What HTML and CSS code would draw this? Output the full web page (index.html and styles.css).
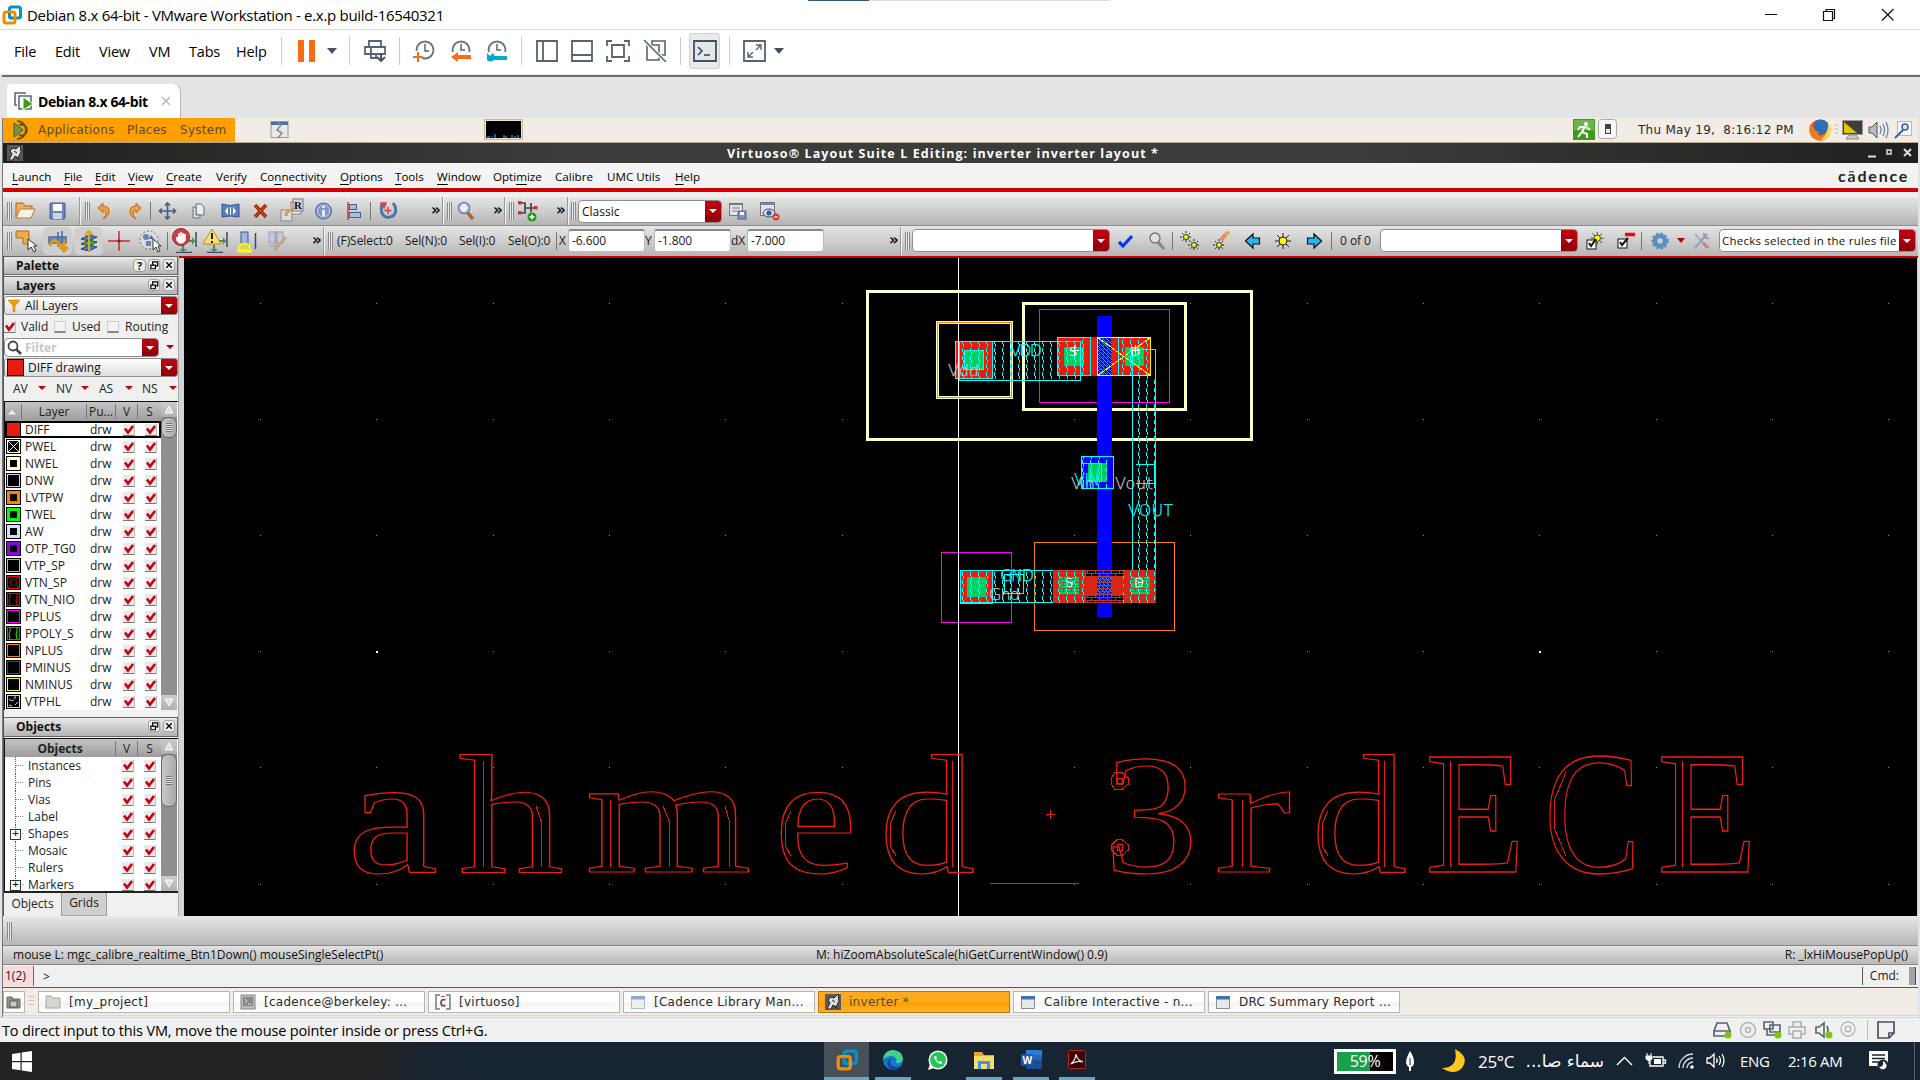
FILE: index.html
```html
<!DOCTYPE html>
<html lang="en">
<head>
<meta charset="utf-8">
<title>Debian 8.x 64-bit - VMware Workstation</title>
<link rel="stylesheet" href="styles.css">
</head>
<body>
<svg class="defs" width="0" height="0">
  <symbol id="ck" viewBox="0 0 12 12"><rect width="12" height="12" fill="#e9e9e9"/><path d="M0 11.5H12" stroke="#777"/><path d="M11.5 0V12" stroke="#bbb"/><path d="M2 4.5L5 8.5L10 2" fill="none" stroke="#c80010" stroke-width="2.6"/></symbol>
  <symbol id="float" viewBox="0 0 14 14"><rect x=".5" y=".5" width="12" height="12" rx="3" fill="#eee" stroke="#999"/><path d="M5 6V3H10.500V7.500H8.500M3 6.500H8V10.500H3Z" fill="none" stroke="#000" stroke-width="1.300"/></symbol>
  <symbol id="close" viewBox="0 0 14 14"><rect x=".5" y=".5" width="12" height="12" rx="3" fill="#eee" stroke="#999"/><path d="M3.500 3.500L9.500 9.500M9.500 3.500L3.500 9.500" stroke="#000" stroke-width="1.400"/></symbol>
  <symbol id="win" viewBox="0 0 16 16"><rect x="1.500" y="2.500" width="13" height="12" fill="#e8e8e4" stroke="#8a8f98"/><rect x="1" y="2" width="14" height="3.500" fill="#3f73b9"/></symbol>
  <symbol id="vmw" viewBox="0 0 20 20"><rect x="7.500" y="2" width="11" height="11" rx="2" fill="none" stroke="#0091cf" stroke-width="3"/><rect x="2" y="7" width="11" height="11" rx="2" fill="none" stroke="#f38b00" stroke-width="3"/><path d="M7.500 8V11.500Q7.500 13 9 13H10" fill="none" stroke="#0091cf" stroke-width="3"/></symbol>
  <symbol id="bird" viewBox="0 0 16 16"><rect width="16" height="16" fill="#5a5a5a"/><path d="M2 15L5 9L3 6L6 3L9 4L13 0L14 7L11 13L8 11L6 15ZM9 12L13 15M7 6L10 8" fill="#ddd" stroke="#222"/></symbol>
  <symbol id="sun" viewBox="0 0 18 18"><path d="M9 1V17M1 9H17M3 3L15 15M15 3L3 15" stroke="#222" stroke-width="1"/><circle cx="9" cy="9" r="4" fill="#ff0" stroke="#222"/></symbol>
</svg>

<header class="titlebar">
  <svg class="logo" width="20" height="20"><use href="#vmw"/></svg>
  <span class="title">Debian 8.x 64-bit - VMware Workstation - e.x.p build-16540321</span>
  <i class="topedge"></i>
  <svg class="winbtns" width="170" height="28"><path d="M21 13.500H33" stroke="#111"/><path d="M79.500 19.500V10.500H88.500V19.500ZM82 10V8.500H90.500V17.500H89" fill="none" stroke="#111" stroke-width="1.200"/><path d="M138 8L149.500 19.500M149.500 8L138 19.500" stroke="#111" stroke-width="1.200"/></svg>
</header>

<nav class="vmbar">
  <span>File</span><span>Edit</span><span>View</span><span>VM</span><span>Tabs</span><span>Help</span>
  <i class="vsep"></i>
  <svg width="18" height="22"><path d="M0 0H6V22H0ZM11 0H17V22H11Z" fill="#ff6a13"/></svg>
  <svg width="10" height="6"><path d="M0 0H10L5 6Z" fill="#44525f"/></svg>
  <i class="vsep"></i>
  <svg width="23" height="22"><path d="M5 7V1H17V7M1 7H21V14H1ZM7 7V14M12 14V18H7V14" fill="none" stroke="#55646f" stroke-width="1.800"/><path d="M17 13V20M13 17L17 21L21 17" fill="none" stroke="#44525f" stroke-width="2"/></svg>
  <i class="vsep"></i>
  <svg width="23" height="22"><circle cx="12" cy="10" r="8.500" fill="none" stroke="#66737d" stroke-width="1.800"/><path d="M12 4V11H16" fill="none" stroke="#55646f" stroke-width="1.500"/><path d="M0 11H9V22H0Z" fill="#fff"/><path d="M5 12V22M0 17H10" stroke="#f56b20" stroke-width="2"/></svg>
  <svg width="24" height="22"><circle cx="12" cy="10" r="8.500" fill="none" stroke="#66737d" stroke-width="1.800"/><path d="M12 4V10H16" fill="none" stroke="#55646f" stroke-width="1.500"/><path d="M0 12H24V22H0Z" fill="#fff"/><path d="M2 17L9 12V15H22V19H9V22Z" fill="#ff6a13"/></svg>
  <svg width="24" height="22"><circle cx="12" cy="10" r="8.500" fill="none" stroke="#66737d" stroke-width="1.800"/><path d="M12 4V10H16" fill="none" stroke="#55646f" stroke-width="1.500"/><path d="M0 12H24V22H0Z" fill="#fff"/><path d="M2 13L5 16L8 13Q10 15 9 16H22V20H9Q5 23 2 20Z" fill="#00a8d6"/></svg>
  <i class="vsep"></i>
  <svg width="23" height="22"><path d="M1 1H21V21H1ZM7 1V21" fill="none" stroke="#55646f" stroke-width="1.800"/></svg>
  <svg width="23" height="22"><path d="M1 1H21V21H1ZM1 15H21" fill="none" stroke="#55646f" stroke-width="1.800"/></svg>
  <svg width="24" height="22"><path d="M1 6V1H6M18 1H23V6M23 16V21H18M6 21H1V16M6 5H18V17H6Z" fill="none" stroke="#55646f" stroke-width="1.800"/></svg>
  <svg width="24" height="22"><path d="M4 5H16V20H4ZM9 5V1H22V15H16" fill="none" stroke="#55646f" stroke-width="1.600"/><path d="M1 0L23 22" stroke="#fff" stroke-width="4"/><path d="M1 0L23 22" stroke="#55646f" stroke-width="1.600"/></svg>
  <i class="vsep"></i>
  <b class="console"><svg width="24" height="22"><path d="M1 1H23V21H1Z" fill="#e3e6e9" stroke="#44525f" stroke-width="1.800"/><path d="M5 7L9 11L5 15M11 15H17" fill="none" stroke="#33414d" stroke-width="1.500"/></svg></b>
  <i class="vsep"></i>
  <svg width="23" height="22"><path d="M1 1H22V21H1Z" fill="none" stroke="#55646f" stroke-width="1.800"/><path d="M5 12V17H10M5 17L10 12M13 10L18 5M13 5H18V10" fill="none" stroke="#55646f" stroke-width="1.400"/></svg>
  <svg width="10" height="6"><path d="M0 0H10L5 6Z" fill="#44525f"/></svg>
</nav>

<div class="tabstrip">
  <div class="tab"><svg width="20" height="18"><path d="M11 2V1H1V13H3M5 17V4H17V17Z" fill="none" stroke="#55646f" stroke-width="1.500"/><path d="M9 5L19 12L9 18Z" fill="#3d9b12" stroke="#fff"/></svg><b>Debian 8.x 64-bit</b><svg class="tx" width="10" height="10"><path d="M1 1L9 9M9 1L1 9" stroke="#b5b5b5" stroke-width="1.300"/></svg></div>
</div>

<main class="guest">
  <div class="panel">
    <div class="places"><svg width="22" height="22"><path d="M3 4L12 11L3 18Z" fill="#6d9a42" stroke="#3c5a2b"/><path d="M6 2A9 9 0 1 1 6 20M8 6A5.500 5.500 0 1 1 8 16" fill="none" stroke="#5c5626" stroke-width="2"/></svg><span>Applications</span><span>Places</span><span>System</span></div>
    <svg width="20" height="18"><rect x="1" y=".5" width="17" height="16" fill="#e9eae8" stroke="#999"/><path d="M1 1H18V4H1Z" fill="#4871a9"/><path d="M8 1L11 4L7 9L12 12L8 17" fill="none" stroke="#888" stroke-width="1.500"/></svg>
    <svg width="40" height="22"><rect x=".5" y=".5" width="38" height="20" fill="#efe0cf" stroke="#c8b59c"/><rect x="2" y="2" width="35" height="17" fill="#000"/><path d="M3 18H6M8 18V17M11 19V15M20 19V16M22 19V17M28 19V16M31 19V17M34 19V16" stroke="#2a7fc0" stroke-width="1.500"/></svg>
    <svg width="22" height="22"><rect width="22" height="21" fill="#3f9b1f"/><rect x="1" y="1" width="20" height="10" fill="#66b84a"/><circle cx="13" cy="5" r="2" fill="#fff"/><path d="M12 7L9 13L14 15V19M9 13L5 18M12 8L7 8L5 11M13 8L17 11" fill="none" stroke="#fff" stroke-width="2"/></svg>
    <svg width="20" height="22"><rect x=".5" y=".5" width="18" height="19" rx="3" fill="#f8f8f6" stroke="#aaa"/><rect x="7" y="5" width="6" height="10" fill="#444"/><rect x="8" y="10" width="4" height="4" fill="#eee"/></svg>
    <span class="clock">Thu May 19, &nbsp;8:16:12 PM</span>
    <svg width="24" height="24"><circle cx="12" cy="12" r="10.500" fill="#e05a10"/><circle cx="13" cy="9" r="7.500" fill="#2a6fb8"/><path d="M2 6L5 8Q6 13 11 14Q8 17 13 18Q19 16 20 9L22 12Q23 19 16 22Q8 24 3 18Q0 13 2 6Z" fill="#ee7a1c"/><path d="M20 5Q24 10 22 16Q19 22 13 22Q21 15 20 5" fill="#ffd94a"/></svg>
    <svg width="6" height="12"><path d="M1 1H4M1 5H4M1 9H4" stroke="#c5b59d"/></svg>
    <svg width="22" height="22"><rect x=".5" y="1.500" width="20" height="14" fill="#3c3f3c" stroke="#999"/><path d="M2 3L15 14H2Z" fill="#e8c300"/><path d="M7 16H14L17 20H4Z" fill="#ccc" stroke="#888"/></svg>
    <svg width="22" height="20"><path d="M1 7H4L9 2V18L4 13H1Z" fill="#bbb" stroke="#555"/><path d="M12 6Q14 10 12 14M15 4Q18 10 15 16M18 2Q22 10 18 18" fill="none" stroke="#6685a6" stroke-width="1.300"/></svg>
    <svg width="19" height="18"><rect x="3.500" y=".5" width="14" height="14" fill="#f5f6f8" stroke="#b5b9c0"/><circle cx="11" cy="6" r="3" fill="#d7e6f5" stroke="#3465a4" stroke-width="1.500"/><path d="M9 9L1 17" stroke="#3465a4" stroke-width="2"/></svg>
  </div>
  <div class="wtitle"><svg width="16" height="16"><use href="#bird"/></svg><b>Virtuoso® Layout Suite L Editing: inverter inverter layout *</b><svg width="48" height="12"><path d="M1 9.500H9" stroke="#ddd" stroke-width="2"/><rect x="20" y="3" width="4" height="4" fill="none" stroke="#ddd" stroke-width="1.500"/><path d="M37 2L44 9M44 2L37 9" stroke="#ddd" stroke-width="2"/></svg></div>
  <div class="cmenu">
    <span><u>L</u>aunch</span><span><u>F</u>ile</span><span><u>E</u>dit</span><span><u>V</u>iew</span><span><u>C</u>reate</span><span>Ver<u>i</u>fy</span><span>Co<u>n</u>nectivity</span><span><u>O</u>ptions</span><span><u>T</u>ools</span><span><u>W</u>indow</span><span>Opti<u>m</u>ize</span><span>Calibre</span><span>UMC Utils</span><span><u>H</u>elp</span><b class="brand">c<span class="abar">ā</span>dence</b>
  </div>

  <div class="bar bar1">
    <i class="grip"></i>
    <svg width="21" height="20"><path d="M1 17V2H8L10 5H17V8" fill="#f0b060" stroke="#a9651c"/><path d="M1 17L5 8H20L16 17Z" fill="#f7f1e6" stroke="#c07a28"/></svg>
    <svg width="18" height="20"><rect x="1" y="2" width="15" height="16" rx="1" fill="#6d86b5" stroke="#44598a"/><rect x="4" y="3" width="9" height="7" fill="#fff"/><rect x="4" y="12" width="9" height="6" fill="#c9d3e6"/></svg>
    <i class="edge"></i><i class="grip"></i>
    <svg width="18" height="20"><path d="M3 7L8 2V5Q15 5 14 12Q13 16 8 18Q12 14 11 11Q10 9 8 9V12Z" fill="#eda04b" stroke="#c06b18"/></svg>
    <svg width="18" height="20"><path d="M15 7L10 2V5Q3 5 4 12Q5 16 10 18Q6 14 7 11Q8 9 10 9V12Z" fill="#eda04b" stroke="#c06b18"/></svg>
    <i class="bsep"></i>
    <svg width="20" height="20"><path d="M9.500 2V18M1.500 10H17.500M7 4.500L9.500 2L12 4.500M7 15.500L9.500 18L12 15.500M4 7.500L1.500 10L4 12.500M15 7.500L17.500 10L15 12.500" fill="none" stroke="#466089" stroke-width="1.700"/></svg>
    <svg width="18" height="20"><path d="M6 3H11L14 6V14H6Z" fill="#e8edf2" stroke="#66717d"/><path d="M3 6H6V14H10V17H3Z" fill="#d5dce4" stroke="#66717d"/></svg>
    <svg width="20" height="20"><path d="M1 3Q9 6 18 3V16Q9 14 1 16Z" fill="#5c7fb8" stroke="#33548c"/><path d="M4 10L7 6V14ZM15 10L12 6V14Z" fill="#fff"/><path d="M9.500 6V14" stroke="#fff"/></svg>
    <svg width="18" height="20"><path d="M3 4L14 16M14 4L3 16" stroke="#9c2a04" stroke-width="3.600"/><path d="M3 4L14 16M14 4L3 16" stroke="#d95c1b" stroke-width="1"/></svg>
    <svg width="26" height="26"><rect x="11" y="4" width="10" height="12" fill="#eee" stroke="#888"/><rect x="1" y="12" width="11" height="11" fill="#ddd" stroke="#888"/><path d="M6 18Q6 12 13 12" fill="none" stroke="#e59b42" stroke-width="3"/><rect x="13" y="1" width="10" height="12" fill="#d5d5d5" stroke="#777"/><text x="14" y="11" class="ricon">R</text></svg>
    <svg width="18" height="20"><circle cx="8.500" cy="10" r="8" fill="#7f95cc" stroke="#5168a4"/><circle cx="8.500" cy="10" r="6" fill="none" stroke="#c9d4ef"/><path d="M8.500 9V15M8.500 5V7" stroke="#fff" stroke-width="2.500"/></svg>
    <svg width="18" height="20"><path d="M2 1V19" stroke="#c33" stroke-width="1.500"/><rect x="3.500" y="3.500" width="7" height="5" fill="#a8bcdf" stroke="#466089"/><rect x="3.500" y="11.500" width="11" height="5" fill="#a8bcdf" stroke="#466089"/></svg>
    <i class="bsep"></i>
    <svg width="20" height="20"><path d="M3 3Q1 10 4 14Q9 19 15 14Q19 8 14 2" fill="none" stroke="#4e73ae" stroke-width="3"/><path d="M7 2L2 2L5 7ZM9 6V13M5.500 9.500H12.500" fill="#4e73ae" stroke="#e04040" stroke-width="1.500"/></svg>
    <span class="more">»</span><i class="edge"></i><i class="grip"></i>
    <svg width="20" height="20"><path d="M10 11L16 18" stroke="#b06a2a" stroke-width="3.500"/><circle cx="7" cy="7" r="5.500" fill="#cfe0f5" stroke="#6a83a8" stroke-width="1.600"/><path d="M7 4V10M4 7H10" stroke="#fff" stroke-width="2"/></svg>
    <span class="more">»</span><i class="edge"></i><i class="grip"></i>
    <svg width="22" height="22"><path d="M3 3H8V13H3M8 8H18M14 3V12" fill="none" stroke="#444" stroke-width="1.700"/><rect x="1" y="1" width="3.500" height="3.500" fill="#c33"/><rect x="1" y="11" width="3.500" height="3.500" fill="#c33"/><rect x="17" y="6" width="3.500" height="3.500" fill="#c33"/><circle cx="15" cy="17" r="4.500" fill="#1a9a1a"/><path d="M15 14.500V19.500M12.500 17H17.500" stroke="#fff" stroke-width="1.500"/></svg>
    <span class="more">»</span><i class="edge"></i><i class="grip"></i>
    <div class="combo c1"><span>Classic</span><i></i></div>
    <svg width="20" height="20"><rect x="1.500" y="2.500" width="13" height="12" fill="#e4e4e4" stroke="#777"/><path d="M2 3.500H14M4 7H12M4 10H9" stroke="#778"/><rect x="10" y="10" width="8" height="8" fill="#7d93c4" stroke="#51648f"/><rect x="12" y="11" width="4" height="3" fill="#fff"/></svg>
    <svg width="22" height="20"><rect x="1.500" y="1.500" width="14" height="13" fill="#e4e4e4" stroke="#777"/><path d="M2 3H15" stroke="#6a88b8" stroke-width="2"/><ellipse cx="10" cy="12" rx="6" ry="4" fill="#cdd9ee" stroke="#446"/><circle cx="10" cy="12" r="2.500" fill="#345a96"/><circle cx="17" cy="16" r="3.500" fill="#cf3b34"/><path d="M15 16H19" stroke="#fff"/></svg>
  </div>

  <div class="bar bar2">
    <i class="grip"></i>
    <svg width="23" height="24"><path d="M1 2H14V15H8V9H1Z" fill="#efaa4e" stroke="#ad6a1c"/><path d="M13 10V21L16 18L19 23L21 22L18.500 17H22Z" fill="#fff" stroke="#333"/></svg>
    <b class="press"><svg width="24" height="24"><path d="M3 8H20V14H3ZM12 3V18M16 2V17" fill="#6f8dc0" stroke="#4a699e" stroke-width="1.500"/><path d="M4 17Q5 12 9 12Q12 12 13 16Q16 17 18 14V21M14 18L18 22L22 18" fill="none" stroke="#d99a1e" stroke-width="3"/></svg></b>
    <b class="press"><svg width="24" height="24"><path d="M4 10L12 6L20 8L12 12Z" fill="#4f78b8" stroke="#24457d"/><path d="M4 15L12 11L20 13L12 17Z" fill="#55a344" stroke="#245a1d"/><path d="M4 20L12 16L20 18L12 22Z" fill="#4f78b8" stroke="#24457d"/><path d="M12 22V4M8 6L12 2L16 6" stroke="#dca818" stroke-width="2" fill="none"/></svg></b>
    <svg width="23" height="24"><path d="M11 2V22M0 12H22" stroke="#e32020" stroke-width="1.500"/><path d="M11 10V14M9 12H13" stroke="#333"/></svg>
    <svg width="24" height="24"><circle cx="10" cy="11" r="9" fill="#d8dbe1" stroke="#777" stroke-dasharray="2 2"/><circle cx="7" cy="8" r="3" fill="#6783b5"/><path d="M12 6L15 10H10Z" fill="#49669a"/><rect x="7" y="12" width="5" height="5" fill="#6783b5"/><path d="M14 10V21L17 18L19 23L21 22L19 17H22Z" fill="#fff" stroke="#333"/></svg>
    <i class="bsep"></i>
    <svg width="25" height="25"><path d="M16 12H20V9L23 13L20 17V14H16ZM10 17V21H7L11 24L15 21H12V17Z" fill="#3d9650"/><path d="M24 4V19M4 24.500H20" stroke="#446" stroke-width="1.500"/><circle cx="9" cy="9" r="8.500" fill="#c6424b" stroke="#922"/><path d="M5 9V12Q9 18 13 12V6M7 10V5M9 10V4M11 10V5" fill="#fff" stroke="#fff" stroke-width="1.600"/></svg>
    <svg width="25" height="25"><path d="M16 12H20V9L23 13L20 17V14H16ZM10 17V21H7L11 24L15 21H12V17Z" fill="#3d9650"/><path d="M24 4V19M4 24.500H20" stroke="#446" stroke-width="1.500"/><path d="M9 1L18 16H0Z" fill="#f7df78" stroke="#c38c10"/><path d="M9 5V11M9 13V15" stroke="#222" stroke-width="2"/></svg>
    <svg width="22" height="24"><rect x="4" y="3" width="7" height="13" fill="#9fb6de" stroke="#3b5a90"/><path d="M4 15H11L14 21H1Z" fill="#d8d060" stroke="#ff0" stroke-width="1.500"/><path d="M0 22.500H15" stroke="#ff0" stroke-width="2"/><path d="M18.500 4V20" stroke="#446" stroke-width="1.500"/></svg>
    <svg width="22" height="24"><rect x="2" y="3" width="6" height="11" fill="#c2cbdb" stroke="#93a3bf"/><rect x="10" y="3" width="6" height="11" fill="#c2cbdb" stroke="#93a3bf"/><path d="M9 2V20" stroke="#d08080"/><path d="M19 8L8 21" stroke="#c8a16d" stroke-width="2.500"/><path d="M2 17H8V22" fill="none" stroke="#93a3bf"/></svg>
    <span class="more">»</span><i class="edge"></i><i class="grip"></i>
    <span>(F)Select:0</span><span>Sel(N):0</span><span>Sel(I):0</span><span>Sel(O):0</span><i class="bsep"></i>
    <span>X</span><span class="field">-6.600</span><span>Y</span><span class="field">-1.800</span><span>dX</span><span class="field">-7.000</span>
    <span class="more">»</span><i class="edge"></i><i class="grip"></i>
    <div class="combo c2"><span></span><i></i></div>
    <svg width="18" height="20"><path d="M2 11L6 15L15 5" fill="none" stroke="#0038f5" stroke-width="3.200"/></svg>
    <svg width="20" height="20"><path d="M10 11L16 18" stroke="#888" stroke-width="3"/><circle cx="7" cy="7" r="5" fill="#d5e3ec" stroke="#777" stroke-width="1.400"/></svg>
    <i class="bsep"></i>
    <svg width="20" height="20"><path d="M6 0V12M0 6H12M2 2L10 10M10 2L2 10M14 8V20M8 14H20M10 10L18 18M18 10L10 18" stroke="#222" stroke-dasharray="2 1"/><circle cx="6" cy="6" r="2.500" fill="#ff0" stroke="#333"/><circle cx="14" cy="14" r="2.500" fill="#ff0" stroke="#333"/></svg>
    <svg width="20" height="20"><path d="M7 8V20M1 14H13M3 10L11 18M11 10L3 18" stroke="#222" stroke-dasharray="2 1"/><circle cx="7" cy="14" r="2.500" fill="#ff0" stroke="#333"/><path d="M9 9L14 3" stroke="#e28b6c" stroke-width="4"/><path d="M13 4L17 1" stroke="#f5a530" stroke-width="4"/></svg>
    <svg width="18" height="20"><path d="M1.500 10L9 3V7H15.500V13H9V17Z" fill="#29b4ee" stroke="#111" stroke-width="1.200"/></svg>
    <svg width="18" height="18"><use href="#sun"/></svg>
    <svg width="18" height="20"><path d="M16.500 10L9 3V7H2.500V13H9V17Z" fill="#29b4ee" stroke="#111" stroke-width="1.200"/></svg>
    <i class="bsep"></i><span>0 of 0</span>
    <div class="combo c2"><span></span><i></i></div>
    <svg width="20" height="20"><g transform="translate(5 0) scale(.8)"><use href="#sun" width="18" height="18"/></g><rect x="2" y="9" width="9" height="9" fill="#fff" stroke="#111"/><path d="M4 12L6 15L11 8" fill="none" stroke="#111" stroke-width="2"/></svg>
    <svg width="20" height="20"><path d="M8 3.500H18" stroke="#f00" stroke-width="3.500"/><rect x="1" y="8" width="9" height="9" fill="#fff" stroke="#111"/><path d="M3 11L5 14L11 7" fill="none" stroke="#111" stroke-width="2"/></svg>
    <i class="bsep"></i>
    <svg width="18" height="20"><circle cx="9" cy="10" r="5" fill="none" stroke="#5c8fc0" stroke-width="4.500"/><circle cx="9" cy="10" r="7.600" fill="none" stroke="#5c8fc0" stroke-width="2" stroke-dasharray="2.500 2"/></svg>
    <svg width="10" height="6"><path d="M1 0H9L5 5Z" fill="#b80000"/></svg>
    <svg width="20" height="20"><path d="M3 3L16 17" stroke="#a9aeb5" stroke-width="2"/><path d="M15 3L3 17" stroke="#8e9fb9" stroke-width="2"/><path d="M11 12L16 17" stroke="#d08080" stroke-width="3"/><path d="M12 2A4 4 0 0 0 17 7" fill="none" stroke="#8e9fb9" stroke-width="2"/></svg>
    <div class="combo c3"><span>Checks selected in the rules file</span><i></i></div>
  </div>

  <section class="work">
    <aside class="dock">
      <div class="hd"><b>Palette</b><b class="q">?</b><svg width="13" height="13"><use href="#float"/></svg><svg width="13" height="13"><use href="#close"/></svg></div>
      <div class="hd"><b>Layers</b><svg width="13" height="13"><use href="#float"/></svg><svg width="13" height="13"><use href="#close"/></svg></div>
      <div class="combo d1"><svg width="14" height="14"><path d="M1 1H13L8 7V13H6V7Z" fill="#f09a10" stroke="#c87c00" stroke-width=".5"/></svg><span>All Layers</span><i></i></div>
      <div class="opts"><svg width="12" height="12"><use href="#ck"/></svg><span>Valid</span><i class="un"></i><span>Used</span><i class="un"></i><span>Routing</span></div>
      <div class="frow"><div class="combo d2"><svg width="15" height="15"><circle cx="6" cy="6" r="4.500" fill="none" stroke="#444" stroke-width="1.800"/><path d="M9 9L14 14" stroke="#444" stroke-width="2.500"/></svg><span>Filter</span><i></i></div><svg width="8" height="5"><path d="M0 0H8L4 4Z" fill="#b00010"/></svg></div>
      <div class="combo d1"><em class="sw0"></em><span>DIFF drawing</span><i></i></div>
      <div class="avs"><span>AV</span><i></i><span>NV</span><i></i><span>AS</span><i></i><span>NS</span><i></i></div>
      <div class="tbl layers">
        <div class="list">
          <div class="th"><svg width="14" height="8"><path d="M3 6.500L7 2L11 6.500Z" fill="#eee"/></svg><span>Layer</span><span>Pu...</span><span>V</span><span>S</span></div>
          <div class="r sel"><em class="s diff"></em><span>DIFF</span><span>drw</span><svg><use href="#ck"/></svg><svg><use href="#ck"/></svg></div>
          <div class="r"><em class="s pwel"><svg viewBox="0 0 11 11"><path d="M0 0L11 11M11 0L0 11" stroke="#ffc"/></svg></em><span>PWEL</span><span>drw</span><svg><use href="#ck"/></svg><svg><use href="#ck"/></svg></div>
          <div class="r"><em class="s nwel"></em><span>NWEL</span><span>drw</span><svg><use href="#ck"/></svg><svg><use href="#ck"/></svg></div>
          <div class="r"><em class="s dnw"></em><span>DNW</span><span>drw</span><svg><use href="#ck"/></svg><svg><use href="#ck"/></svg></div>
          <div class="r"><em class="s lvt"></em><span>LVTPW</span><span>drw</span><svg><use href="#ck"/></svg><svg><use href="#ck"/></svg></div>
          <div class="r"><em class="s twel"></em><span>TWEL</span><span>drw</span><svg><use href="#ck"/></svg><svg><use href="#ck"/></svg></div>
          <div class="r"><em class="s aw"></em><span>AW</span><span>drw</span><svg><use href="#ck"/></svg><svg><use href="#ck"/></svg></div>
          <div class="r"><em class="s otp"></em><span>OTP_TG0</span><span>drw</span><svg><use href="#ck"/></svg><svg><use href="#ck"/></svg></div>
          <div class="r"><em class="s vtp"></em><span>VTP_SP</span><span>drw</span><svg><use href="#ck"/></svg><svg><use href="#ck"/></svg></div>
          <div class="r"><em class="s vtn"><svg viewBox="0 0 11 11"><path d="M0 0L11 11M11 0L0 11" stroke="#f00"/><circle cx="5.500" cy="5.500" r="3" fill="#000" stroke="#f00" stroke-dasharray="2 1"/></svg></em><span>VTN_SP</span><span>drw</span><svg><use href="#ck"/></svg><svg><use href="#ck"/></svg></div>
          <div class="r"><em class="s vtn"><svg viewBox="0 0 11 11"><path d="M2 0V3L1 6L2 11M9 0V3L8 6L9 11" fill="none" stroke="#f00"/></svg></em><span>VTN_NIO</span><span>drw</span><svg><use href="#ck"/></svg><svg><use href="#ck"/></svg></div>
          <div class="r"><em class="s pplus"></em><span>PPLUS</span><span>drw</span><svg><use href="#ck"/></svg><svg><use href="#ck"/></svg></div>
          <div class="r"><em class="s pplus"><svg viewBox="0 0 11 11"><path d="M2 0V3L1 6L2 11M9 0V3L8 6L9 11" fill="none" stroke="#0f0"/></svg></em><span>PPOLY_S</span><span>drw</span><svg><use href="#ck"/></svg><svg><use href="#ck"/></svg></div>
          <div class="r"><em class="s nplus"></em><span>NPLUS</span><span>drw</span><svg><use href="#ck"/></svg><svg><use href="#ck"/></svg></div>
          <div class="r"><em class="s pminus"></em><span>PMINUS</span><span>drw</span><svg><use href="#ck"/></svg><svg><use href="#ck"/></svg></div>
          <div class="r"><em class="s nminus"></em><span>NMINUS</span><span>drw</span><svg><use href="#ck"/></svg><svg><use href="#ck"/></svg></div>
          <div class="r"><em class="s vtphl"><svg viewBox="0 0 11 11"><path d="M1 3Q3 6 6 4M7 0V3M10 6L7 9M1 9L4 10" fill="none" stroke="#cdd"/></svg></em><span>VTPHL</span><span>drw</span><svg><use href="#ck"/></svg><svg><use href="#ck"/></svg></div>
        </div>
        <div class="sb"><svg width="16" height="15"><path d="M4 11L8 4L12 11Z" fill="#ddd" stroke="#fff"/></svg><i class="t1"></i><svg width="16" height="15"><path d="M4 4L8 11L12 4Z" fill="#ddd" stroke="#fff"/></svg></div>
      </div>
      <div class="hd objhd"><b>Objects</b><svg width="13" height="13"><use href="#float"/></svg><svg width="13" height="13"><use href="#close"/></svg></div>
      <div class="tbl objs">
        <div class="list">
          <div class="th"><b>Objects</b><span>V</span><span>S</span></div>
          <div class="o"><i></i><span>Instances</span><svg><use href="#ck"/></svg><svg><use href="#ck"/></svg></div>
          <div class="o"><i></i><span>Pins</span><svg><use href="#ck"/></svg><svg><use href="#ck"/></svg></div>
          <div class="o"><i></i><span>Vias</span><svg><use href="#ck"/></svg><svg><use href="#ck"/></svg></div>
          <div class="o"><i></i><span>Label</span><svg><use href="#ck"/></svg><svg><use href="#ck"/></svg></div>
          <div class="o"><i class="plus"></i><span>Shapes</span><svg><use href="#ck"/></svg><svg><use href="#ck"/></svg></div>
          <div class="o"><i></i><span>Mosaic</span><svg><use href="#ck"/></svg><svg><use href="#ck"/></svg></div>
          <div class="o"><i></i><span>Rulers</span><svg><use href="#ck"/></svg><svg><use href="#ck"/></svg></div>
          <div class="o"><i class="plus"></i><span>Markers</span><svg><use href="#ck"/></svg><svg><use href="#ck"/></svg></div>
        </div>
        <div class="sb"><svg width="16" height="15"><path d="M4 11L8 4L12 11Z" fill="#ddd" stroke="#fff"/></svg><i class="t2"></i><svg width="16" height="15"><path d="M4 4L8 11L12 4Z" fill="#ddd" stroke="#fff"/></svg></div>
      </div>
      <div class="dtabs"><span>Objects</span><span>Grids</span></div>
    </aside>

    <svg class="canvas" width="1733" height="658" viewBox="184 258 1733 658" shape-rendering="crispEdges">
      <defs>
        <pattern id="wave" width="8" height="8" x="962" y="340" patternUnits="userSpaceOnUse"><path d="M0 0h1v4h-1zM1 4h1v3h-1z" fill="#0ff"/></pattern>
        <pattern id="brick" width="8" height="6" x="1053" y="570" patternUnits="userSpaceOnUse"><path d="M0 .5H8M0 3.500H8M2.500 0V3M6.500 3V6" stroke="#b53a26"/></pattern>
        <pattern id="hatch" width="4" height="4" patternUnits="userSpaceOnUse"><rect width="4" height="4" fill="#00f"/><path d="M0 0h1v1h-1zM1 1h1v1h-1zM2 2h1v1h-1zM3 3h1v1h-1zM3 1h1v1h-1z" fill="#49c"/></pattern>
      </defs>
      <rect x="184" y="258" width="1733" height="658" fill="#000"/>
      <g stroke="#8a8a8a" stroke-dasharray="1 115.300"><path d="M260 303.500H1917M260 419.500H1917M260 535.500H1917M260 651.500H1917M260 767.500H1917M260 884.500H1917"/></g>
      <path d="M376 651h2v2h-2zM1539 651h2v2h-2z" fill="#fff"/>

      <g fill="none">
        <rect x="867.500" y="291.500" width="384" height="148" stroke="#ffffc8" stroke-width="3"/>
        <rect x="1023.500" y="303.500" width="162" height="106" stroke="#ffffc8" stroke-width="3"/>
        <rect x="937.500" y="322.500" width="74" height="75" stroke="#ffffc8" stroke-width="3"/>
        <rect x="937.500" y="322.500" width="74" height="75" stroke="#ff8000"/>
        <rect x="1039.500" y="309.500" width="130" height="93" stroke="#f0f"/>
        <rect x="1034.500" y="542.500" width="140" height="88" stroke="#ff8000"/>
        <rect x="941.500" y="552.500" width="70" height="70" stroke="#f0f"/>
      </g>
      <rect x="1097" y="316" width="15" height="301" fill="#00f"/>

      <rect x="955" y="341" width="38" height="38" fill="#e81c0c"/><rect x="964" y="350" width="20" height="20" fill="#00cf64"/>
      <rect x="1057" y="337" width="40" height="39" fill="#e81c0c"/><rect x="1064" y="347" width="20" height="19" fill="#00cf64"/>
      <rect x="1112" y="337" width="39" height="39" fill="#e81c0c"/><rect x="1125" y="347" width="19" height="19" fill="#00cf64"/>
      <rect x="1097" y="337" width="15" height="39" fill="url(#hatch)"/>
      <rect x="961" y="341" width="120" height="39" fill="url(#wave)"/><rect x="1082" y="337" width="9" height="39" fill="url(#wave)"/><rect x="1118" y="337" width="31" height="39" fill="url(#wave)"/>
      <g fill="none" stroke="#0ff"><rect x="955.500" y="341.500" width="37" height="37"/><rect x="964.500" y="350.500" width="19" height="19"/><rect x="959.500" y="341.500" width="121" height="39"/><rect x="1057.500" y="337.500" width="33" height="38"/><path d="M1118.500 337V376"/></g>
      <path d="M1097.500 337.500H1150.500V375.500H1097.500ZL1150.500 375.500M1150.500 337.500L1097.500 375.500" fill="none" stroke="#ff0"/>

      <rect x="1081" y="456" width="33" height="33" fill="#00f"/><rect x="1088" y="463" width="19" height="19" fill="#00cf64"/><rect x="1081" y="456" width="26" height="33" fill="url(#wave)"/>
      <path d="M1081.500 456.500H1113.500V488.500H1081.500ZM1082 463.500H1101.500V482" fill="none" stroke="#0ff"/>

      <rect x="960" y="570" width="33" height="33" fill="#e81c0c"/><rect x="967" y="577" width="19" height="20" fill="#00cf64"/>
      <rect x="1053" y="570" width="33" height="33" fill="#e81c0c"/><rect x="1123" y="570" width="33" height="33" fill="#e81c0c"/><rect x="1086" y="577" width="37" height="19" fill="#e81c0c"/>
      <rect x="1060" y="577" width="19" height="18" fill="#00cf64"/><rect x="1131" y="577" width="19" height="18" fill="#00cf64"/><rect x="1097" y="578" width="15" height="18" fill="url(#hatch)"/>
      <rect x="1053" y="570" width="103" height="33" fill="url(#brick)"/><rect x="1053.500" y="570.500" width="102" height="32" fill="none" stroke="#b53a26"/>
      <rect x="962" y="570" width="124" height="33" fill="url(#wave)"/><rect x="1123" y="570" width="32" height="33" fill="url(#wave)"/>
      <path d="M1053 570.500H960.500V602.500H1053M960 603.500H993M992.500 570V603M1004.500 574.500H1023.500V593.500H1004.500Z" fill="none" stroke="#0ff"/>

      <rect x="1136" y="376" width="20" height="194" fill="url(#wave)"/>
      <path d="M1132.500 570V349.500H1155.500V570M1135.500 464.500H1154.500V483.500H1135.500" fill="none" stroke="#0ff"/>
      <rect x="958" y="258" width="1" height="658" fill="#fff"/>

      <g class="lbl gray" shape-rendering="auto"><text x="948" y="376" textLength="31">Vdd</text><text x="1071" y="489" textLength="24">Vin</text><text x="1115" y="489" textLength="38">Vout</text><text x="989" y="600" textLength="31">Gnd</text></g>
      <g class="lbl cyan"><text x="1010" y="356" textLength="32">VDD</text><text x="1074" y="485" textLength="26">VIN</text><text x="1128" y="516" textLength="45">VOUT</text><text x="1000" y="581" textLength="34">GND</text></g>
      <g class="lbl white"><text x="1069" y="356">S</text><text x="1130" y="356">D</text><text x="1065" y="587">S</text><text x="1134" y="587">D</text></g>
      <path d="M1070 350.500H1079M1074.500 345V355M1131 350.500H1140M1135.500 345V355M1068 582.500H1073M1138 582.500H1143" stroke="#fff"/>

      <g class="big" shape-rendering="auto">
        <text transform="translate(347 872) scale(1.210 1)">a</text>
        <text transform="translate(458 872) scale(1.250 1)">h</text>
        <text transform="translate(585 872) scale(1.260 1)">m</text>
        <text transform="translate(774 872) scale(1.100 1)">e</text>
        <text transform="translate(879 872) scale(1.134 1)">d</text>
        <text class="dig" transform="translate(1104 872) scale(1.100 1)">3</text>
        <text transform="translate(1214 872) scale(1.370 1)">r</text>
        <text transform="translate(1311 872) scale(1.134 1)">d</text>
        <text class="cap" transform="translate(1425 872) scale(.940 1)">E</text>
        <text class="cap" transform="translate(1544 872) scale(.830 1)">C</text>
        <text class="cap" transform="translate(1657 872) scale(.940 1)">E</text>
      </g>
      <path d="M990 883.500H1079M1046 814.500H1055M1050.500 810V819M483.500 761V867M610.500 800V867M952.500 761V867M1242.500 800V867M1384.500 761V867M1450.500 761V867M1682.500 761V867" stroke="#e81c0c"/>
      <path d="M1115 772.500H1122L1128.500 778V784L1122 789.500H1115L1111.500 784V778ZM1117.500 778.500H1122.500V783.500H1117.500ZM1117 839.500H1122L1128.500 845V850L1122 855.500H1117L1111.500 850V845ZM1117.500 844.500H1122.500V850.500H1117.500Z" fill="none" stroke="#e81c0c"/>
      <path d="M791 811L785.500 823V846L791 856M896 811L890.500 823V846L896 856M1328 811L1322.500 823V846L1328 856M1566 772L1554.500 800V829L1566 856M536 806L541.500 822V867M725 806L729.500 822V867M663 806L669.500 822V867" fill="none" stroke="#e81c0c"/>
    </svg>
  </section>

  <div class="lower"><i class="grip"></i></div>
  <div class="mouse"><span>mouse L: mgc_calibre_realtime_Btn1Down() mouseSingleSelectPt()</span><span>M: hiZoomAbsoluteScale(hiGetCurrentWindow() 0.9)</span><span>R: _lxHiMousePopUp()</span></div>
  <div class="cmd"><b>1(2)</b><span>&gt;</span><em>Cmd:</em><i></i></div>

  <div class="mtask">
    <div class="w show"><svg width="16" height="16"><path d="M1 14V3H6L7 5H14V14Z" fill="#8f9483" stroke="#666b5c"/><rect x="4" y="7" width="7" height="6" fill="#c9ccc0" stroke="#555"/></svg></div>
    <i class="dots"></i>
    <div class="w"><svg width="16" height="16"><path d="M1 14V2H6L7 4H15V14Z" fill="#d5d8cc" stroke="#a5a89b"/></svg><span>[my_project]</span></div>
    <div class="w"><svg width="16" height="16"><rect x="1" y="1" width="14" height="14" fill="#bbb" stroke="#888"/><rect x="3" y="3" width="10" height="9" fill="#888"/><path d="M5 5L7 7L5 9M8 10H11" fill="none" stroke="#ddd"/></svg><span>[cadence@berkeley: ...</span></div>
    <div class="w"><svg width="16" height="16"><path d="M5 1H1V15H5M11 1H15V15H11" fill="none" stroke="#777" stroke-width="1.500"/><path d="M10.500 6Q6 4.500 6 9Q6 12.500 10.500 11.500" fill="none" stroke="#555" stroke-width="1.800"/><path d="M6 2.500H10" stroke="#d44"/></svg><span>[virtuoso]</span></div>
    <div class="w dim"><svg width="16" height="16"><use href="#win"/></svg><span>[Cadence Library Man...</span></div>
    <div class="w on"><svg width="16" height="16"><use href="#bird"/></svg><span>inverter *</span></div>
    <div class="w"><svg width="16" height="16"><use href="#win"/></svg><span>Calibre Interactive - n...</span></div>
    <div class="w"><svg width="16" height="16"><use href="#win"/></svg><span>DRC Summary Report ...</span></div>
  </div>
</main>

<footer class="vmstatus">
  <span>To direct input to this VM, move the mouse pointer inside or press Ctrl+G.</span>
  <svg width="20" height="18"><path d="M1 15V10L4 2H14L17 10V15ZM1 10H17" fill="none" stroke="#55646f" stroke-width="1.700"/><circle cx="15" cy="14" r="3.500" fill="#7cc610"/></svg>
  <svg width="20" height="18"><circle cx="9" cy="9" r="7.500" fill="none" stroke="#adb3b8" stroke-width="1.500"/><circle cx="9" cy="9" r="2.500" fill="none" stroke="#adb3b8" stroke-width="1.500"/></svg>
  <svg width="20" height="18"><path d="M1 1H10V8H1ZM7 4H17V11H7ZM4 8V14H13" fill="none" stroke="#55646f" stroke-width="1.600"/><circle cx="15" cy="14" r="3.500" fill="#7cc610"/></svg>
  <svg width="20" height="18"><path d="M5 6V1H13V6M5 13H1V6H17V13H13M5 10H13V17H5Z" fill="none" stroke="#a6adb3" stroke-width="1.500"/></svg>
  <svg width="20" height="18"><path d="M1 6H4L9 2V16L4 12H1ZM12 5Q14 9 12 13" fill="none" stroke="#55646f" stroke-width="1.600"/><circle cx="14" cy="14" r="3.500" fill="#7cc610"/></svg>
  <svg width="20" height="18"><circle cx="8" cy="8" r="7" fill="none" stroke="#b5bbbf" stroke-width="1.400"/><circle cx="8" cy="8" r="2.800" fill="none" stroke="#b5bbbf" stroke-width="1.500"/></svg>
  <i></i>
  <svg width="20" height="18"><path d="M1 1H17V12L12 17H1ZM12 17V12H17" fill="none" stroke="#44525f" stroke-width="1.700"/></svg>
</footer>

<footer class="wintask">
  <svg width="21" height="21"><path d="M0 3L8.500 1.800V10H0ZM9.700 1.600L20 0V10H9.700ZM0 11.200H8.500V19.300L0 18.100ZM9.700 11.200H20V21L9.700 19.500Z" fill="#fff"/></svg>
  <div class="app act"><svg width="22" height="22" viewBox="0 0 20 20"><use href="#vmw"/></svg></div>
  <div class="app"><svg width="20" height="20"><circle cx="10" cy="10" r="10" fill="#1379cf"/><path d="M0 10Q1 0 10 0Q20 1 20 9Q19 14 13 13Q15 7 9 6Q3 6 0 10" fill="#42d08a"/><path d="M8 8Q5 15 13 17Q17 17 19 15Q14 22 7 19Q1 13 8 8" fill="#0c4b9c"/></svg></div>
  <div class="app off"><svg width="20" height="20"><circle cx="10" cy="10" r="9.500" fill="#fff"/><path d="M0 20L2 14L6 18Z" fill="#fff"/><circle cx="10" cy="10" r="8" fill="#25c656"/><path d="M6.500 6Q5.500 8 8.500 11.500Q12 15 14 13.500L14 12L12 11L11 12Q9 11 8 9L9 8L8 6Z" fill="#fff"/></svg></div>
  <div class="app"><svg width="21" height="20"><path d="M0 2H8L10 5H20V19H0Z" fill="#e6a52a"/><path d="M0 6H20V19H0Z" fill="#ffd968"/><path d="M4 19V11H16V19H13V14H7V19Z" fill="#3d97dd"/></svg></div>
  <div class="app"><svg width="21" height="20"><path d="M5 0H21V19H5Z" fill="#2b7cd3"/><path d="M5 5H21V10H5Z" fill="#2368b8"/><path d="M5 10H21V19H5Z" fill="#184f94"/><rect x="0" y="4" width="12" height="12" fill="#1a56b0"/><text x="1.500" y="13.500" class="wd">W</text></svg></div>
  <div class="app two"><svg width="18" height="19"><rect x=".5" y=".5" width="17" height="18" rx="1" fill="#360606" stroke="#b92018"/><path d="M3 14Q8 9 8 4Q9 10 15 12Q9 10 3 14" fill="none" stroke="#f2d6d6" stroke-width="1.300"/></svg></div>
  <div class="batt">59%</div>
  <svg width="13" height="24"><path d="M6 2Q2 9 2 14Q3 17 5 18V22H7V18Q10 17 10 13Q10 8 6 2Z" fill="#fff"/><path d="M6 9V16" stroke="#1a242f"/></svg>
  <svg width="28" height="28"><path d="M15 2Q30 10 22 21Q14 29 2 21Q19 21 15 2Z" fill="#ffc61c"/></svg>
  <span class="deg">25°C</span><span class="ar" dir="rtl" lang="ar">سماء صا...</span>
  <svg width="17" height="10"><path d="M1 9L8.500 1.500L16 9" fill="none" stroke="#fff" stroke-width="1.400"/></svg>
  <svg width="22" height="16"><path d="M8 4H18V13H5V8M18 7H20.500V10H18" fill="none" stroke="#fff" stroke-width="1.300"/><rect x="9" y="6" width="7" height="5" fill="#fff"/><path d="M2 0V3M6 0V3M1 3H7V6L4 8L1 6ZM4 7V11" fill="#fff" stroke="#fff"/></svg>
  <svg width="18" height="18"><path d="M2 16A14 14 0 0 1 16 2M6 16A10 10 0 0 1 16 6M10 16A6 6 0 0 1 16 10" fill="none" stroke="#d8dde1" stroke-width="1.300"/><circle cx="15" cy="15" r="1.800" fill="#fff"/></svg>
  <svg width="22" height="18"><path d="M1 6H4L8 2V15L4 11H1Z" fill="none" stroke="#fff" stroke-width="1.300"/><path d="M10.500 6Q12 8.500 10.500 11M13 4Q16 8.500 13 13M16 2Q20 8.500 16 15" fill="none" stroke="#fff" stroke-width="1.200"/></svg>
  <span>ENG</span><span>2:16 AM</span>
  <svg width="22" height="22"><path d="M1 1H20V16H14V21L9 16H1Z" fill="#fff"/><path d="M4 5H17M4 8.500H17M4 12H11" stroke="#1a242f" stroke-width="1.300"/><circle cx="15" cy="15" r="5.500" fill="#1a242f"/><path d="M15 11Q20 14 18 18Q14 21 11 17Q16 17 15 11" fill="#fff"/></svg>
  <i class="peek"></i>
</footer>
</body>
</html>
```
FILE: styles.css
```css
* { box-sizing: border-box; }
body { margin: 0; width: 1920px; height: 1080px; overflow: hidden; background: #e3e4e6; font: 12px "Open Sans", "Noto Sans", sans-serif; color: #1a1a1a; display: flex; flex-direction: column; }
i, em { font-style: normal; }
svg { display: block; flex: none; }
.defs { position: absolute; }

.titlebar { height: 29px; flex: none; background: #fff; display: flex; align-items: center; padding-left: 2px; position: relative; }
.title { margin-left: 5px; font-size: 15px; letter-spacing: -.3px; color: #000; white-space: nowrap; }
.winbtns { margin-left: auto; margin-right: 6px; }
.topedge { position: absolute; left: 808px; top: 0; width: 302px; height: 1px; background: linear-gradient(90deg, #2d5b7d 61px, #ddd 61px); }

.vmbar { height: 46px; flex: none; background: #fff; border-top: 1px solid #dcdcdc; border-bottom: 1px solid #e6e6e6; display: grid; grid-template-columns: 41px 44px 50px 40px 47px 45px 17px 29px 22px 15px 35px 14px 36px 36px 36px 15px 35px 35px 37px 37px 9px 40px 14px 31px 20px; align-items: center; padding: 0 0 2px 14px; font-size: 14.500px; letter-spacing: -.2px; color: #000; }
.vsep { width: 1px; height: 28px; background: #c8ccd0; }
.console { width: 31px; height: 36px; background: #e9eaec; border: 1px solid #cfd2d5; border-radius: 3px; display: grid; place-items: center; }

.tabstrip { height: 43px; flex: none; background: #e3e4e6; border-top: 2px solid #6c6e70; margin-left: 2px; padding: 7px 0 0 5px; display: flex; }
.tab { width: 174px; height: 34px; background: #fff; border-right: 1px solid #b5b5b5; border-radius: 4px 8px 0 0; display: flex; align-items: center; padding-left: 7px; font-size: 14px; letter-spacing: -.4px; color: #000; white-space: nowrap; }
.tab b { margin-left: 4px; width: 117px; }
.tx { margin-left: 6px; }

.guest { height: 899px; flex: none; width: 1915px; margin-left: 3px; display: flex; flex-direction: column; background: #f0f0f0; box-shadow: -1px 0 #777; }
.guest > * { flex: none; }
.panel { height: 25px; background: #f1ece5; border-bottom: 1px solid #b7a78e; display: grid; grid-template-columns: 267px 214px 1089px 25px 40px 170px 26px 8px 26px 26px 22px; align-items: center; font: 12px "DejaVu Sans", sans-serif; letter-spacing: .28px; color: #2a2a2a; }
.places { width: 232px; height: 24px; background: #ff9f00; display: grid; grid-template-columns: 27px 89px 53px 50px; align-items: center; padding-left: 8px; color: #5a4a2c; }
.wtitle { height: 20px; background: linear-gradient(90deg, #1f1f1f, #3c3c3a 30%, #3c3c3a 70%, #1f1f1f); display: grid; grid-template-columns: 696px 480px 1fr; align-items: center; padding: 0 3px 0 4px; color: #fff; }
.wtitle b { text-align: center; font-size: 12.500px; letter-spacing: 1.1px; white-space: nowrap; }
.wtitle svg:last-child { justify-self: end; }
.cmenu { height: 29px; background: linear-gradient(#f4f4f6, #f2f2f2); border-bottom: 4px solid #d00000; display: grid; grid-template-columns: 52px 31px 33px 38px 50px 44px 80px 55px 42px 56px 62px 52px 68px 1163px 1fr; align-items: center; padding: 1px 0 0 9px; font-size: 11.600px; color: #000; }
.cmenu u { text-underline-offset: 3px; }
.cmenu .brand { font: bold 16px/18px Lato, sans-serif; letter-spacing: 1.8px; white-space: nowrap; color: #222; }
.abar { background: linear-gradient(#e02030 6px, #222 6px); -webkit-background-clip: text; background-clip: text; color: transparent; }
.bar { display: grid; align-items: center; padding-left: 4px; background: linear-gradient(#e6e6e6, #b5b5b5); border-bottom: 1px solid #8c8c8c; white-space: nowrap; font-size: 12px; }
.bar1 { height: 34px; border-top: 5px solid #f0f0f0; grid-template-columns: 8px 34px 31px 5px 10px 31px 24px 8px 32px 31px 31px 28px 35px 31px 24px 9px 52px 12px 4px 10px 36px 12px 4px 8px 39px 12px 3px 7px 150px 31px 30px; padding-bottom: 1px; }
.bar2 { height: 32px; border-bottom: 2px solid #d00000; grid-template-columns: 8px 28px 31px 34px 31px 28px 5px 31px 34px 30px 45px 12px 4px 9px 68px 54px 49px 48px 3px 9px 77px 9px 77px 16px 142px 12px 4px 7px 205px 31px 24px 8px 32px 32px 30px 31px 26px 9px 40px 205px 32px 24px 10px 25px 16px 27px 197px; padding-bottom: 1px; }
.bar2 > span { letter-spacing: -.05px; }
.grip { width: 5px; height: 18px; background: repeating-linear-gradient(90deg, #8a8a8a 0 1px, #e8e8e8 1px 2px); }
.edge { width: 1px; height: 28px; background: #f4f4f4; box-shadow: -1px 0 #999; }
.bsep { width: 1px; height: 18px; background: #777; }
.more { font: bold 15px/16px "DejaVu Sans", sans-serif; margin-top: -2px; color: #111; }
.press { width: 29px; height: 28px; border-radius: 5px; background: #cfcfcf; display: grid; place-items: center; }
.ricon { font: bold 11px "Liberation Serif", serif; fill: #111; }
.combo { height: 23px; background: #fff; border: 1px solid #8e8e8e; border-radius: 4px; display: flex; align-items: center; overflow: hidden; color: #111; }
.combo span { flex: 1; padding-left: 3px; white-space: nowrap; }
.combo i { width: 16px; align-self: stretch; background: linear-gradient(#c40012, #8e0008); display: grid; place-items: center; }
.combo i::after, .avs i::after { content: ""; border: 4px solid transparent; border-top-color: #fff; border-bottom: 0; }
.c1 { width: 144px; } .c2 { width: 198px; } .c3 { width: 197px; }
.c3 span { padding-left: 2px; font-size: 11.500px; letter-spacing: .22px; }
.field { width: 77px; height: 23px; background: #fff; border: 1px solid #bbb; border-top: 2px solid #888; border-radius: 3px; padding-left: 3px; line-height: 19px; }

.work { height: 658px; display: flex; background: #d3d3da; }
.dock { width: 176px; height: 660px; margin-top: -2px; background: #f0f0f0; border-left: 1px solid #555; border-right: 1px solid #aaa; display: flex; flex-direction: column; color: #222; }
.dock > * { flex: none; }
.canvas { margin-left: 5px; }
.hd { height: 19px; margin-bottom: 1px; background: linear-gradient(#e8e8e8, #b4b4b4); border: 1px solid #666; border-width: 1px 1px 1px 0; display: flex; align-items: center; gap: 2px; padding: 0 1px 1px 12px; font-size: 12px; color: #111; }
.hd b:first-child { margin-right: auto; }
.q { width: 13px; height: 13px; border: 1px solid #999; border-radius: 4px; background: #eee; line-height: 11px; text-align: center; font-size: 11px; }
.d1 { height: 19px; background: linear-gradient(#fff, #ddd); padding-left: 2px; border-radius: 3px; font-size: 12px; }
.d1 span { padding-left: 4px; }
.opts { height: 23px; display: grid; grid-template-columns: 17px 33px 18px 35px 18px 50px; align-items: center; font-size: 12px; }
.un { width: 12px; height: 12px; background: #f3f3f3; border: 1px solid #ccc; border-bottom: 2px solid #888; }
.frow { display: flex; align-items: center; gap: 7px; margin-bottom: 1px; }
.d2 { width: 155px; height: 19px; font-size: 12px; font-weight: bold; padding-left: 2px; }
.d2 span { color: #c6c6c6; }
.sw0 { width: 17px; height: 17px; background: #e81c0c; border: 1px solid #000; }
.avs { height: 23px; margin-bottom: 1px; display: grid; grid-template-columns: 25px 18px 25px 18px 26px 17px 27px 9px; align-items: center; padding-left: 9px; font-size: 12px; }
.avs i { width: 8px; height: 5px; display: grid; }
.avs i::after { border-top-color: #c00010; }
.tbl { display: grid; grid-template-columns: 156px 16px; border: 2px solid #111; border-width: 1px 0 0 1px; width: 174px; background: #fff; overflow: hidden; }
.layers { height: 309px; }
.objs { height: 155px; border-bottom: 2px solid #222; }
.list { overflow: hidden; font-size: 12px; }
.th { height: 19px; background: linear-gradient(#c4c4c4, #9d9d9d); display: grid; align-items: center; text-align: center; grid-template-columns: 16px 65px 29px 22px 24px; font-size: 12px; }
.layers .th svg + span, .layers .th span + span { border-left: 1px solid #777; line-height: 15px; }
.objs .th { grid-template-columns: 110px 22px 24px; height: 18px; }
.objs .th span { border-left: 1px solid #777; line-height: 15px; }
.r { height: 17px; display: grid; grid-template-columns: 19px 65px 33px 22px 17px; align-items: center; padding-left: 1px; font-size: 12px; line-height: 16px; }
.r > svg, .o > svg { width: 12px; height: 12px; }
.r.sel { outline: 2px solid #000; outline-offset: -2px; }
.s { width: 15px; height: 15px; border: 1px solid #000; background: #000; color: #000; box-shadow: inset 0 0 0 1px currentColor; padding: 1px; }
.s svg { width: 11px; height: 11px; }
.diff { background: #e81c0c; color: #e81c0c; } .pwel { color: #ffc; } .nwel { color: #ffffc8; } .dnw { color: #f5bdf5; } .lvt { color: #ff8000; } .twel { color: #0f0; } .aw { color: #d5e0ff; } .otp { color: #9000e8; } .vtp { color: #0ff; } .vtn { color: #f00; } .pplus { color: #f0f; } .nplus { color: #ff8000; } .pminus { color: #9000e8; } .nminus { color: #ff0; } .vtphl { color: #cdd; }
.nwel, .lvt, .twel, .aw, .otp { box-shadow: inset 0 0 0 3px currentColor; }
.sb { background: #8f8f8f; display: flex; flex-direction: column; }
.sb svg { background: linear-gradient(#ccc, #b0b0b0); }
.sb svg:last-child { margin-top: auto; }
.sb i { border-radius: 7px; border: 1px solid #666; background: linear-gradient(90deg, #c8c8c8, #a8a8a8); display: grid; place-items: center; }
.sb i::after { content: ""; width: 6px; height: 9px; background: repeating-linear-gradient(#777 0 1px, #ddd 1px 2px); }
.t1 { height: 21px; } .t2 { height: 53px; }
.objhd { margin-top: 7px; height: 20px; margin-bottom: 1px; }
.o { height: 17px; display: grid; grid-template-columns: 23px 94px 22px 17px; align-items: center; font-size: 12px; line-height: 16px; }
.o i { height: 17px; margin-left: 10px; border-left: 1px dotted #555; background: linear-gradient(90deg, #888 50%, transparent 50%) 0 8px / 2px 1px repeat-x; margin-right: 4px; position: relative; }
.plus::before { content: "+"; position: absolute; left: -6px; top: 4px; width: 9px; height: 9px; border: 1px solid #333; background: #fff; font: bold 9px/7px "DejaVu Sans", sans-serif; text-align: center; }
.dtabs { height: 24px; display: flex; font-size: 12px; line-height: 22px; }
.dtabs span { width: 58px; text-align: center; border-right: 1px solid #999; }
.dtabs span + span { width: 45px; height: 23px; line-height: 20px; background: #cfcfcf; border-bottom: 1px solid #aaa; }

.lbl { font: 200 16px "DejaVu Sans Light", "DejaVu Sans", sans-serif; stroke-width: .25; }
.gray { fill: #c8c8c8; stroke: #c8c8c8; } .cyan { fill: #0ff; stroke: #0ff; } .white { fill: #fff; stroke: #fff; font-size: 13px; }
.big { font: 170px "Liberation Serif", serif; fill: none; stroke: #f02010; stroke-width: 1.25; }
.big text { vector-effect: non-scaling-stroke; }
.big .cap { font-size: 175px; }
.big .dig { font-size: 171px; }

.lower { height: 30px; background: linear-gradient(#e8e8e8, #b6b6b6); border-bottom: 1px solid #888; padding: 6px 0 0 4px; display: flex; }
.mouse { height: 19px; background: linear-gradient(#e2e2e2, #b8b8b8); border-bottom: 1px solid #888; display: grid; grid-template-columns: 803px 1fr auto; align-items: center; padding: 0 10px 2px 10px; font-size: 12px; letter-spacing: .02px; color: #111; }
.cmd { height: 23px; background: #f0f0f0; border-bottom: 1px solid #555; display: flex; align-items: center; font-size: 12px; }
.cmd b { width: 31px; height: 20px; line-height: 20px; font-weight: normal; background: #fadadd; border-right: 1px solid #666; padding-left: 2px; }
.cmd span { padding-left: 9px; }
.cmd em { margin-left: auto; border-left: 1px solid #555; padding-left: 7px; line-height: 18px; font-size: 12px; margin-right: 10px; }
.cmd i { width: 7px; height: 18px; background: #a2a0aa; border-right: 1px solid #444; margin-right: 2px; }

.mtask { height: 28px; background: #f1ece5; border-bottom: 1px solid #d8d8d8; display: flex; align-items: center; gap: 3px; font: 12px "DejaVu Sans", sans-serif; letter-spacing: .28px; }
.w { width: 192px; height: 22px; background: linear-gradient(#fff 45%, #f3f3f3 55%, #fff); border: 1px solid #b9b4ad; display: flex; align-items: center; gap: 8px; padding-left: 6px; white-space: nowrap; color: #2a2a2a; }
.show { width: 22px; padding-left: 2px; }
.dots { width: 5px; height: 12px; margin: 0 1px 0 1px; background: repeating-linear-gradient(#d0c0a5 0 1px, transparent 1px 4px); }
.w.on { background: linear-gradient(#ffa91e 50%, #ff9f00 50%, #ffb030); border-color: #b97700; color: #5a4a2c; }
.dim svg { opacity: .6; }

.vmstatus { height: 25px; flex: none; background: #f0f0f0; border-top: 1px solid #d5d5d8; display: grid; grid-template-columns: 1711px 26px 24px 25px 27px 25px 27px 10px 22px; align-items: center; padding-left: 2px; font-size: 14.500px; letter-spacing: -.16px; color: #000; }
.vmstatus i { width: 1px; height: 20px; background: #bbb; }

.wintask { height: 38px; flex: none; background: linear-gradient(90deg, #232323 360px, #182431 440px, #162531 900px, #182431); display: grid; grid-template-columns: 812px 51px 45px 46px 47px 46px 275px 70px 36px 38px 46px 92px 29px 32px 29px 34px 48px 80px 46px 6px; align-items: center; padding-left: 12px; color: #fff; font-size: 15px; letter-spacing: -.3px; white-space: nowrap; }
.app { width: 36px; height: 38px; border-bottom: 3px solid #6ba5bd; display: grid; place-items: center; }
.act { width: 45px; background: #475058; }
.off { border-color: transparent; }
.wd { font: bold 10px "Open Sans", sans-serif; fill: #fff; }
.batt { width: 62px; height: 25px; border: 3px solid #fff; background: linear-gradient(90deg, #18a04a 59%, #000 59%); text-align: center; line-height: 18px; font-size: 16px; }
.deg { font-size: 17px; }
.ar { width: 80px; font-size: 17px; letter-spacing: 0; font-family: "DejaVu Sans", sans-serif; }
.peek { width: 1px; height: 38px; background: #55606a; }
```
